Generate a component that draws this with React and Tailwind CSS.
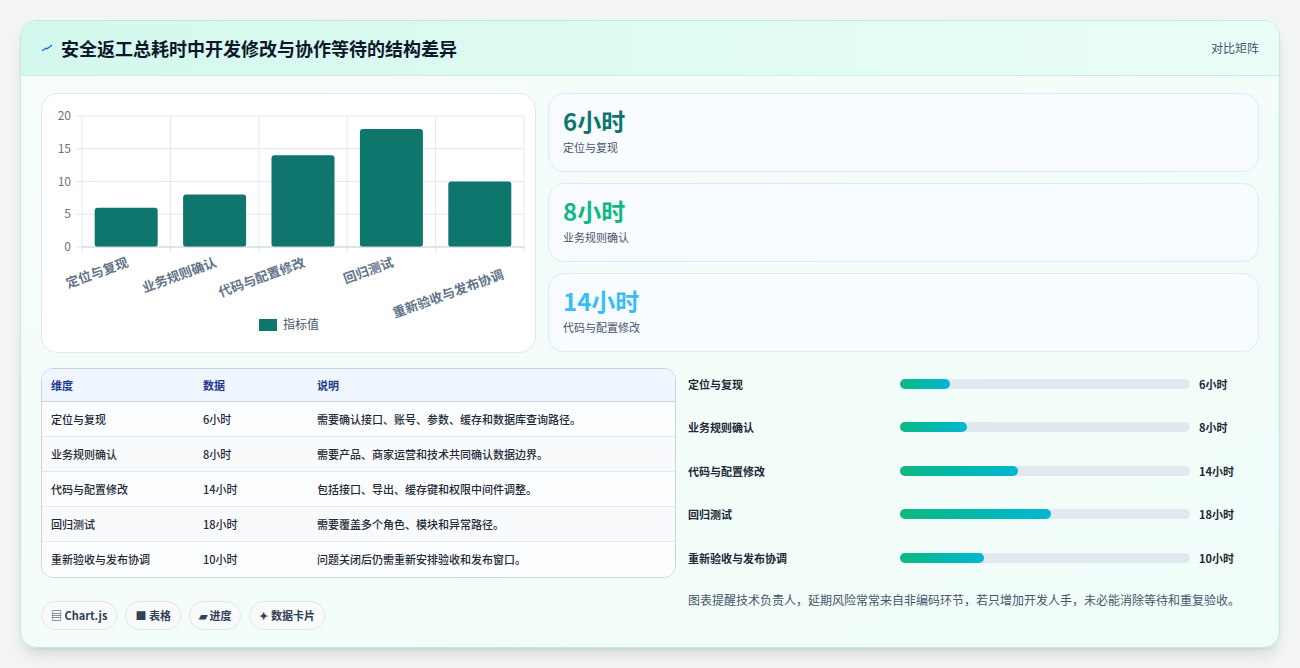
const F = { fontFamily: '"Noto Sans CJK SC", "Noto Sans", sans-serif' };
const data = [
  ["定位与复现", 6, "需要确认接口、账号、参数、缓存和数据库查询路径。"],
  ["业务规则确认", 8, "需要产品、商家运营和技术共同确认数据边界。"],
  ["代码与配置修改", 14, "包括接口、导出、缓存键和权限中间件调整。"],
  ["回归测试", 18, "需要覆盖多个角色、模块和异常路径。"],
  ["重新验收与发布协调", 10, "问题关闭后仍需重新安排验收和发布窗口。"],
];

function Chart() {
  const y = (v) => 153 - (v / 20) * 131;
  const xs = [40, 128.4, 216.8, 305.2, 393.6, 482];
  return (
    <svg width="495" height="259" viewBox="0 0 495 259" style={F}>
      {[0, 5, 10, 15, 20].map((v) => (
        <g key={v}>
          <line x1="34" x2="482" y1={y(v)} y2={y(v)} stroke="#e2e8f0" />
          <text x="29" y={y(v) + 4} fontSize="12" fill="#64748b" textAnchor="end">{v}</text>
        </g>
      ))}
      {xs.map((x, i) => (
        <line key={i} x1={x} x2={x} y1="22" y2="159" stroke="#e2e8f0" />
      ))}
      {data.map(([n, v], i) => {
        const cx = (xs[i] + xs[i + 1]) / 2;
        const ly = i === 4 ? 184 : 172;
        const lx = i === 4 ? cx + 25 : cx + 3;
        return (
          <g key={n}>
            <rect x={cx - 31.5} y={y(v)} width="63" height={153 - y(v)} rx="3" fill="#0f766e" />
            <text x={lx} y={ly} fontSize="13" fontWeight="700" fill="#64748b" textAnchor="end" transform={`rotate(-20 ${lx} ${ly})`}>{n}</text>
          </g>
        );
      })}
      <line x1="40" x2="482" y1="153" y2="153" stroke="#cbd5e1" />
      <rect x="217" y="225" width="18" height="12" fill="#0f766e" />
      <text x="241" y="235" fontSize="12" fill="#475569">指标值</text>
    </svg>
  );
}

export default function App() {
  const stats = [
    ["6小时", "定位与复现", "text-[#0f766e]"],
    ["8小时", "业务规则确认", "text-[#10b981]"],
    ["14小时", "代码与配置修改", "text-[#38bdf8]"],
  ];
  return (
    <div className="w-[1300px] h-[668px] bg-[#f3f4f6] p-5" style={F}>
      <div className="h-[628px] rounded-2xl border border-[#b9ede0] bg-gradient-to-br from-[#f7fdfb] to-[#f0fdf9] overflow-hidden shadow-lg">
        <div className="h-[55px] flex items-center justify-between px-5 bg-gradient-to-r from-[#d3f8ee] to-[#eafdf7] border-b border-[#cdeee6]">
          <div className="flex items-center gap-2">
            <svg width="12" height="10" viewBox="0 0 12 10"><path d="M1 8 L5 5 L6 6 L11 2" stroke="#2563eb" strokeWidth="1.3" fill="none" /></svg>
            <h1 className="text-[18px] font-bold text-[#0f172a]">安全返工总耗时中开发修改与协作等待的结构差异</h1>
          </div>
          <span className="text-[12px] text-[#475569]">对比矩阵</span>
        </div>
        <div className="px-5 pt-[17px] grid grid-cols-[495px_1fr] gap-x-[12px]">
          <div className="h-[260px] rounded-2xl border border-[#e2e8f0] bg-white">
            <Chart />
          </div>
          <div className="flex flex-col gap-[11px]">
            {stats.map(([v, l, c]) => (
              <div key={l} className="h-[79px] rounded-2xl border border-[#dbeafe] bg-[#f8fbff] px-[14px] pt-[9px]">
                <div className={`text-[24px] font-bold leading-[36px] ${c}`}>{v}</div>
                <div className="text-[11px] text-[#475569]">{l}</div>
              </div>
            ))}
          </div>
        </div>
        <div className="px-5 pt-[15px] grid grid-cols-[635px_1fr] gap-x-[12px]">
          <div>
            <div className="rounded-xl border border-[#cbd5e1] overflow-hidden bg-white text-[11px]">
              <div className="grid grid-cols-[152px_114px_1fr] h-[33px] items-center px-[9px] bg-[#eff6ff] border-b border-[#cbd5e1] text-[#1e3a8a] font-bold">
                <span>维度</span><span>数据</span><span>说明</span>
              </div>
              {data.map(([n, v, d], i) => (
                <div key={n} className={`grid grid-cols-[152px_114px_1fr] h-[35px] items-center px-[9px] text-[#1f2937] font-medium ${i < 4 ? "border-b border-[#e2e8f0]" : ""} ${i % 2 ? "bg-[#f8fafc]" : "bg-[#fbfdff]"}`}>
                  <span>{n}</span><span>{v}小时</span><span>{d}</span>
                </div>
              ))}
            </div>
            <div className="flex gap-2 mt-[23px] text-[11px] font-bold text-[#334155]">
              {["▤ Chart.js", "■ 表格", "▰ 进度", "✦ 数据卡片"].map((t) => (
                <span key={t} className="h-[29px] px-[9px] flex items-center rounded-full border border-[#e2e8f0] bg-[#f8fafc]">{t}</span>
              ))}
            </div>
          </div>
          <div className="text-[11px] -mt-[6px]">
            {data.map(([n, v]) => (
              <div key={n} className="h-[43.5px] flex items-center font-bold text-[#1f2937]">
                <span className="w-[212px]">{n}</span>
                <div className="w-[290px] h-[10px] rounded-full bg-[#e2e8f0]">
                  <div className="h-full rounded-full bg-gradient-to-r from-[#10b981] to-[#06b6d4]" style={{ width: `${v * 2.9}%` }} />
                </div>
                <span className="ml-[9px]">{v}小时</span>
              </div>
            ))}
            <p className="mt-[10px] w-[575px] text-[12px] leading-[20px] text-[#475569]">图表提醒技术负责人，延期风险常常来自非编码环节，若只增加开发人手，未必能消除等待和重复验收。</p>
          </div>
        </div>
      </div>
    </div>
  );
}
